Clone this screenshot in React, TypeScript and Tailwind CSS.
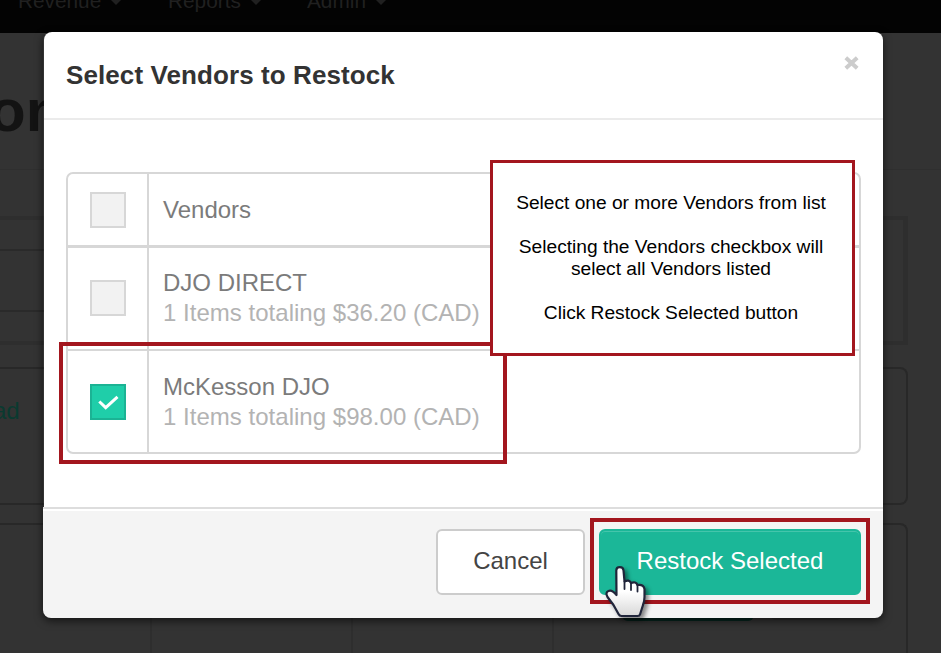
import clsx from 'clsx'

const navItems = [
  { label: 'Revenue', width: 'w-[150px]' },
  { label: 'Reports', width: 'w-[139px]' },
  { label: 'Admin', width: 'w-[120px]' },
]

const vendors = [
  { name: 'DJO DIRECT', summary: '1 Items totaling $36.20 (CAD)', checked: false },
  { name: 'McKesson DJO', summary: '1 Items totaling $98.00 (CAD)', checked: true },
]

function NavBar() {
  return (
    <nav className="flex h-[33px] bg-[#030303] pl-[18px] text-[20.8px] text-[#202020]">
      {navItems.map((item) => (
        <div key={item.label} className={clsx('-mt-[11px] flex h-6 shrink-0 items-center', item.width)}>
          <span className="leading-6">{item.label}</span>
          <svg className="mt-[2px] ml-[10px]" width="10" height="5" viewBox="0 0 10 5">
            <path d="M0 0h10L5 5z" fill="#202020" />
          </svg>
        </div>
      ))}
    </nav>
  )
}

/* Page behind the dialog, already dimmed */
function PageBackdrop() {
  return (
    <div className="h-[653px] w-[941px] overflow-hidden bg-[#333]">
      <NavBar />
      <div className="h-[137px] border-b border-[#2f2f2f]">
        <h1 className="-ml-[11px] pt-[43px] text-[60px] leading-[70px] font-bold text-[#131313]">on</h1>
      </div>
      <div className="mt-[46px] h-[129px] w-[908px] border-y-4 border-r-5 border-[#2e2e2e] pt-[29px]">
        <div className="h-[63px] w-[880px] border-y-2 border-[#2a2a2a]" />
      </div>
      <div className="mt-[22px] h-[138px] w-[908px] rounded-r-lg border-y-2 border-r-2 border-[#282828]">
        <p className="-ml-[7px] pt-[28px] text-[24px] leading-7 text-[#0a3a30]">ad</p>
      </div>
      <div className="mt-[18px] flex h-[140px] w-[908px] rounded-tr-lg border-t-2 border-r-2 border-[#282828]">
        <div className="w-[152px] border-r-2 border-[#2e2e2e]" />
        <div className="w-[201px] border-r-2 border-[#2e2e2e]" />
        <div className="w-[201px] border-r-2 border-[#2e2e2e]" />
        <div className="flex gap-4 pt-[56px] pl-[68px]">
          <div className="h-[40px] w-[132px] rounded-md bg-[#05251e]" />
          <div className="h-[39px] w-[72px] rounded-md bg-[#2c2c2c]" />
        </div>
      </div>
    </div>
  )
}

function Checkbox({ checked = false }: { checked?: boolean }) {
  return (
    <div
      className={clsx(
        'flex size-9 items-center justify-center border-2',
        checked ? 'border-[#1bb394] bg-[#1fcea9]' : 'border-[#d7d7d7] bg-[#f2f2f2]',
      )}
    >
      {checked && (
        <svg width="22" height="18" viewBox="0 0 22 18" fill="none">
          <path d="M2.300 8.500l6.400 6.200L20.500 3.800" stroke="#fff" strokeWidth="3" />
        </svg>
      )}
    </div>
  )
}

function VendorTable() {
  return (
    <div className="h-[282px] w-[795px] rounded-[7px] border-2 border-[#d7d7d7] text-[24px] leading-[30px] text-[#7b7b7b]">
      <div className="flex h-[74px] border-b-3 border-[#d7d7d7]">
        <div className="w-[81px] border-r-2 border-[#d7d7d7] pt-[18px] pl-[22px]">
          <Checkbox />
        </div>
        <div className="pt-[21px] pl-[14px]">Vendors</div>
      </div>
      {vendors.map((vendor, i) => (
        <div
          key={vendor.name}
          className={clsx('flex', i === 0 ? 'h-[103px] border-b-2 border-[#d7d7d7]' : 'h-[101px]')}
        >
          <div
            className={clsx(
              'w-[81px] border-r-2 border-[#d7d7d7] pl-[22px]',
              i === 0 ? 'pt-8' : 'pt-[33px]',
            )}
          >
            <Checkbox checked={vendor.checked} />
          </div>
          <div className={clsx('pl-[14px]', i === 0 ? 'pt-5' : 'pt-[21px]')}>
            <p>{vendor.name}</p>
            <p className="tracking-[0.02px] text-[#b3b3b3]">{vendor.summary}</p>
          </div>
        </div>
      ))}
    </div>
  )
}

function RestockDialog() {
  return (
    <div className="absolute top-8 left-[43px] flex h-[586px] w-[840px] flex-col rounded-lg shadow-[0_3px_9px_rgba(0,0,0,0.6)]">
      <div className="ml-px flex h-[88px] justify-between rounded-t-lg border-b-2 border-[#ebebeb] bg-white pr-[24px] pl-[22px]">
        <h2 className="pt-[28px] text-[26px] leading-[30px] font-bold tracking-[0.09px] text-[#333]">
          Select Vendors to Restock
        </h2>
        <svg className="mt-[24px]" width="15" height="14" viewBox="0 0 15 14">
          <path d="M1.800 1.800l11.400 10.400M13.200 1.800l-11.400 10.400" stroke="#ccc" strokeWidth="4" />
        </svg>
      </div>
      <div className="ml-px h-[387px] bg-white pt-[52px] pl-[22px]">
        <VendorTable />
      </div>
      <div className="flex h-[111px] rounded-b-lg border-t-2 border-[#ddd] bg-[#f4f4f4] pr-[22px] shadow-[inset_0_2px_0_#fff]">
        <div className="ml-auto flex gap-[14px] pt-5 text-[24px]">
          <button className="h-[66px] w-[149px] rounded-md border-2 border-[#ccc] bg-white pb-[2px] text-[#444]">
            Cancel
          </button>
          <button className="h-[66px] w-[262px] rounded-md border-2 border-[#1bb798] bg-[#1bb798] pb-[2px] text-white shadow-[inset_0_1px_0_#44c5ab]">
            Restock Selected
          </button>
        </div>
      </div>
    </div>
  )
}

function Annotations() {
  return (
    <>
      <div className="absolute top-[342px] left-[59px] h-[122px] w-[448px] border-4 border-[#a3161e]" />
      <div className="absolute top-[518px] left-[590px] h-[86px] w-[280px] border-4 border-[#a3161e]" />
      <div className="absolute top-[160px] left-[490px] h-[196px] w-[365px] border-3 border-[#a3161e] bg-white pt-[29px] pr-[3px] text-center text-[19.2px] leading-[22px] tracking-[-0.02px] text-black">
        <p>Select one or more Vendors from list</p>
        <p className="mt-[22px]">
          Selecting the Vendors checkbox will
          <br />
          select all Vendors listed
        </p>
        <p className="mt-[22px]">Click Restock Selected button</p>
      </div>
    </>
  )
}

function HandCursor() {
  return (
    <svg
      className="absolute top-[563px] left-[602px] drop-shadow-[3px_3px_2px_rgba(0,0,0,0.45)]"
      width="48"
      height="56"
      viewBox="0 0 48 56"
    >
      <defs>
        <linearGradient id="hand" x1="0" y1="0" x2="0" y2="1">
          <stop offset="0.5" stopColor="#fff" />
          <stop offset="1" stopColor="#d8d8d8" />
        </linearGradient>
      </defs>
      <path
        d="M14.300 7.500Q14.300 4.200 17.800 4.200Q21.200 4.200 21.500 7.500L22.500 18.500Q27 16 29 20Q34 18 35.500 22Q41.500 21 42.500 26V34Q42.500 38 41 42L38 51.500Q37.500 53 35.500 53H19.500Q17.500 53 16.500 51L11.500 42L5.500 34Q3 29.500 6.500 28Q10 26.500 14.500 32Z"
        fill="url(#hand)"
        stroke="#20253a"
        strokeWidth="2.2"
        strokeLinejoin="round"
      />
      <path d="M22.500 18.500v7.500M29 20v7M35.500 22v6.500" stroke="#20253a" strokeWidth="1.8" strokeLinecap="round" />
    </svg>
  )
}

export default function App() {
  return (
    <main className="relative h-[653px] w-[941px] overflow-hidden font-['Liberation_Sans',Arial,sans-serif]">
      <PageBackdrop />
      <RestockDialog />
      <Annotations />
      <HandCursor />
    </main>
  )
}
